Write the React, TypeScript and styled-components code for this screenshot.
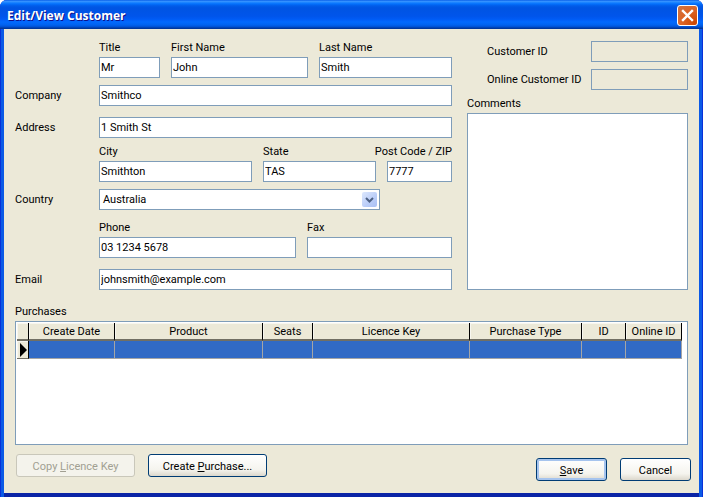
import styled, { createGlobalStyle } from 'styled-components';

const GlobalStyle = createGlobalStyle`
  html, body {
    margin: 0;
    padding: 0;
    background: #ffffff;
  }
  body {
    font-family: Roboto, "Liberation Sans", sans-serif;
    font-size: 11px;
    color: #000000;
  }
`;

const columns = [
  { title: 'Create Date', width: 86 },
  { title: 'Product', width: 148 },
  { title: 'Seats', width: 50 },
  { title: 'Licence Key', width: 157 },
  { title: 'Purchase Type', width: 112 },
  { title: 'ID', width: 44 },
  { title: 'Online ID', width: 56 },
];

const App = () => {
  return (
    <Window>
      <GlobalStyle />
      <TitleBar>
        <WindowTitle>Edit/View Customer</WindowTitle>
        <CloseButton aria-label="Close">
          <svg width="13" height="13" viewBox="0 0 13 13">
            <path d="M2 2 L11 11 M11 2 L2 11" stroke="#ffffff" strokeWidth="2.4" strokeLinecap="square" />
          </svg>
        </CloseButton>
      </TitleBar>
      <Client>
        <TopSection>
          <Form>
            <Row>
              <Spacer />
              <Stacked $width={61}>
                <span>Title</span>
                <TextInput readOnly value="Mr" />
              </Stacked>
              <Stacked $width={137}>
                <span>First Name</span>
                <TextInput readOnly value="John" />
              </Stacked>
              <Stacked $width={133}>
                <span>Last Name</span>
                <TextInput readOnly value="Smith" />
              </Stacked>
            </Row>
            <Row $top={7}>
              <SideLabel>Company</SideLabel>
              <TextInput readOnly value="Smithco" $width={353} />
            </Row>
            <Row $top={11}>
              <SideLabel>Address</SideLabel>
              <TextInput readOnly value="1 Smith St" $width={353} />
            </Row>
            <Row $top={7}>
              <Spacer />
              <Stacked $width={153}>
                <span>City</span>
                <TextInput readOnly value="Smithton" />
              </Stacked>
              <Stacked $width={113}>
                <span>State</span>
                <TextInput readOnly value="TAS" />
              </Stacked>
              <Stacked $width={65}>
                <PostLabel>Post Code / ZIP</PostLabel>
                <TextInput readOnly value="7777" />
              </Stacked>
            </Row>
            <Row $top={7}>
              <SideLabel>Country</SideLabel>
              <ComboBox>
                <span>Australia</span>
                <ComboArrow>
                  <svg width="9" height="6" viewBox="0 0 9 6">
                    <path d="M1 1 L4.5 4.5 L8 1" fill="none" stroke="#4d6185" strokeWidth="2" />
                  </svg>
                </ComboArrow>
              </ComboBox>
            </Row>
            <Row $top={11}>
              <Spacer />
              <Stacked $width={197}>
                <span>Phone</span>
                <TextInput readOnly value="03 1234 5678" />
              </Stacked>
              <Stacked $width={145}>
                <span>Fax</span>
                <TextInput readOnly value="" />
              </Stacked>
            </Row>
            <Row $top={11}>
              <SideLabel>Email</SideLabel>
              <TextInput readOnly value="johnsmith@example.com" $width={353} />
            </Row>
          </Form>
          <SidePanel>
            <IdRow>
              <span>Customer ID</span>
              <IdBox />
            </IdRow>
            <IdRow>
              <span>Online Customer ID</span>
              <IdBox />
            </IdRow>
            <CommentsLabel>Comments</CommentsLabel>
            <CommentsBox />
          </SidePanel>
        </TopSection>
        <PurchasesLabel>Purchases</PurchasesLabel>
        <GridBox>
          <GridRow>
            <HeaderCorner />
            {columns.map((col) => (
              <HeaderCell key={col.title} $width={col.width}>
                {col.title}
              </HeaderCell>
            ))}
          </GridRow>
          <GridRow>
            <RowHeader>
              <svg width="8" height="14" viewBox="0 0 8 14">
                <path d="M1 0 L8 7 L1 14 Z" fill="#000000" />
              </svg>
            </RowHeader>
            {columns.map((col) => (
              <SelectedCell key={col.title} $width={col.width} />
            ))}
          </GridRow>
        </GridBox>
        <ButtonBar>
          <ButtonGroup>
            <PushButton disabled $width={119}>
              Copy <u>L</u>icence Key
            </PushButton>
            <PushButton $width={119}>
              Create <u>P</u>urchase...
            </PushButton>
          </ButtonGroup>
          <ButtonGroupRight>
            <PushButton $width={71} $isDefault>
              <u>S</u>ave
            </PushButton>
            <PushButton $width={71}>Cancel</PushButton>
          </ButtonGroupRight>
        </ButtonBar>
      </Client>
    </Window>
  );
};

export default App;

const Window = styled.div`
  width: 703px;
  height: 497px;
  display: flex;
  flex-direction: column;
  overflow: hidden;
  border-radius: 7px 7px 0 0;
  background: #0b5ae6;
  box-shadow: inset 1px 0 0 #0831d9, inset -1px 0 0 #0831d9;
`;

const TitleBar = styled.div`
  height: 29px;
  flex: none;
  display: flex;
  align-items: center;
  justify-content: space-between;
  padding: 2px 5px 0 7px;
  box-sizing: border-box;
  background: linear-gradient(
    180deg,
    #0058e6 0%,
    #3a93ff 4%,
    #288eff 7%,
    #127dff 10%,
    #036ffc 14%,
    #0262ee 18%,
    #0057e5 24%,
    #0054e3 30%,
    #0055eb 56%,
    #005bf5 66%,
    #026afe 76%,
    #0062ef 86%,
    #0052d6 92%,
    #0040ab 96%,
    #003092 100%
  );
`;

const WindowTitle = styled.div`
  font-family: "Open Sans", "Noto Sans", sans-serif;
  font-weight: 700;
  font-size: 12px;
  color: #ffffff;
  text-shadow: 1px 1px 0 #0f1089;
`;

const CloseButton = styled.div`
  width: 21px;
  height: 21px;
  box-sizing: border-box;
  display: flex;
  align-items: center;
  justify-content: center;
  border: 1px solid #ffffff;
  border-radius: 3px;
  background: radial-gradient(circle at 90% 90%, #cc4600 0%, #dc6527 55%, #cd7546 100%);
`;

const Client = styled.div`
  flex: 1;
  margin: 0 4px 4px 4px;
  padding: 12px 11px 0 11px;
  background: #ece9d8;
  display: flex;
  flex-direction: column;
  box-shadow: 0 4px 0 0 #0a24a6;
`;

const TopSection = styled.div`
  display: flex;
  gap: 15px;
`;

const Form = styled.div`
  width: 437px;
  flex: none;
  display: flex;
  flex-direction: column;
`;

const Row = styled.div<{ $top?: number }>`
  display: flex;
  gap: 11px;
  margin-top: ${(p) => p.$top ?? 0}px;
`;

const Spacer = styled.div`
  width: 73px;
  flex: none;
`;

const SideLabel = styled.div`
  width: 73px;
  flex: none;
  padding-top: 4px;
`;

const Stacked = styled.label<{ $width: number }>`
  width: ${(p) => p.$width}px;
  flex: none;
  display: flex;
  flex-direction: column;
  gap: 2px;
  line-height: 14px;
  span {
    height: 14px;
    white-space: nowrap;
  }
`;

const PostLabel = styled.span`
  align-self: flex-end;
`;

const TextInput = styled.input<{ $width?: number }>`
  width: ${(p) => (p.$width ? `${p.$width}px` : '100%')};
  height: 21px;
  box-sizing: border-box;
  border: 1px solid #7f9db9;
  padding: 0 1px;
  margin: 0;
  font: inherit;
  color: #000000;
  background: #ffffff;
  outline: none;
`;

const ComboBox = styled.div`
  width: 281px;
  height: 21px;
  box-sizing: border-box;
  border: 1px solid #7f9db9;
  background: #ffffff;
  display: flex;
  align-items: center;
  justify-content: space-between;
  padding: 1px 1px 1px 3px;
`;

const ComboArrow = styled.div`
  width: 15px;
  height: 15px;
  margin-right: 1px;
  border-radius: 2px;
  display: flex;
  align-items: center;
  justify-content: center;
  background: linear-gradient(135deg, #dde8fd 0%, #bacdf8 60%, #a9c0f5 100%);
`;

const SidePanel = styled.div`
  flex: 1;
  display: flex;
  flex-direction: column;
`;

const IdRow = styled.div`
  display: flex;
  justify-content: space-between;
  align-items: center;
  padding-left: 20px;
  margin-bottom: 7px;
`;

const IdBox = styled.div`
  width: 97px;
  height: 21px;
  box-sizing: border-box;
  border: 1px solid #7f9db9;
  background: #ece9d8;
`;

const CommentsLabel = styled.div`
  line-height: 14px;
  margin-bottom: 2px;
`;

const CommentsBox = styled.div`
  height: 177px;
  box-sizing: border-box;
  border: 1px solid #7f9db9;
  background: #ffffff;
`;

const PurchasesLabel = styled.div`
  line-height: 14px;
  margin-top: 15px;
  margin-bottom: 2px;
`;

const GridBox = styled.div`
  width: 673px;
  height: 124px;
  flex: none;
  box-sizing: border-box;
  border: 1px solid #7f9db9;
  background: #ffffff;
  padding: 1px 0 0 1px;
`;

const GridRow = styled.div`
  display: flex;
`;

const HeaderCorner = styled.div`
  width: 12px;
  height: 18px;
  flex: none;
  box-sizing: border-box;
  background: #ece9d8;
  border-right: 1px solid #000000;
  border-bottom: 2px solid #716f64;
  box-shadow: inset 1px 1px 0 #f7f6ef;
`;

const HeaderCell = styled.div<{ $width: number }>`
  width: ${(p) => p.$width}px;
  height: 18px;
  flex: none;
  box-sizing: border-box;
  background: #ece9d8;
  border-right: 1px solid #000000;
  border-bottom: 2px solid #716f64;
  box-shadow: inset 1px 1px 0 #f7f6ef;
  text-align: center;
  line-height: 17px;
  white-space: nowrap;
`;

const RowHeader = styled.div`
  width: 12px;
  height: 18px;
  flex: none;
  box-sizing: border-box;
  background: #ece9d8;
  border-right: 1px solid #000000;
  border-bottom: 1px solid #716f64;
  box-shadow: inset 1px 1px 0 #f7f6ef;
  display: flex;
  align-items: center;
  justify-content: center;
`;

const SelectedCell = styled.div<{ $width: number }>`
  width: ${(p) => p.$width}px;
  height: 18px;
  flex: none;
  box-sizing: border-box;
  background: #316ac5;
  border-right: 1px solid #a5a5a5;
  border-bottom: 1px solid #a5a5a5;
`;

const ButtonBar = styled.div`
  display: flex;
  justify-content: space-between;
  width: 675px;
  margin-left: 1px;
  margin-top: 9px;
`;

const ButtonGroup = styled.div`
  display: flex;
  gap: 13px;
`;

const ButtonGroupRight = styled(ButtonGroup)`
  margin-top: 4px;
`;

const PushButton = styled.button<{ $width: number; $isDefault?: boolean }>`
  width: ${(p) => p.$width}px;
  height: 23px;
  box-sizing: border-box;
  padding: 2px 0 0 0;
  font: inherit;
  border: 1px solid #003c74;
  border-radius: 3px;
  color: #000000;
  background: linear-gradient(180deg, #ffffff 0%, #f5f4ee 70%, #dcd8cc 100%);
  box-shadow: ${(p) => (p.$isDefault ? 'inset 0 0 0 2px #a6c4ee' : 'none')};
  &:disabled {
    color: #a19f92;
    border-color: #c9c7ba;
    background: #f4f3ec;
  }
`;
